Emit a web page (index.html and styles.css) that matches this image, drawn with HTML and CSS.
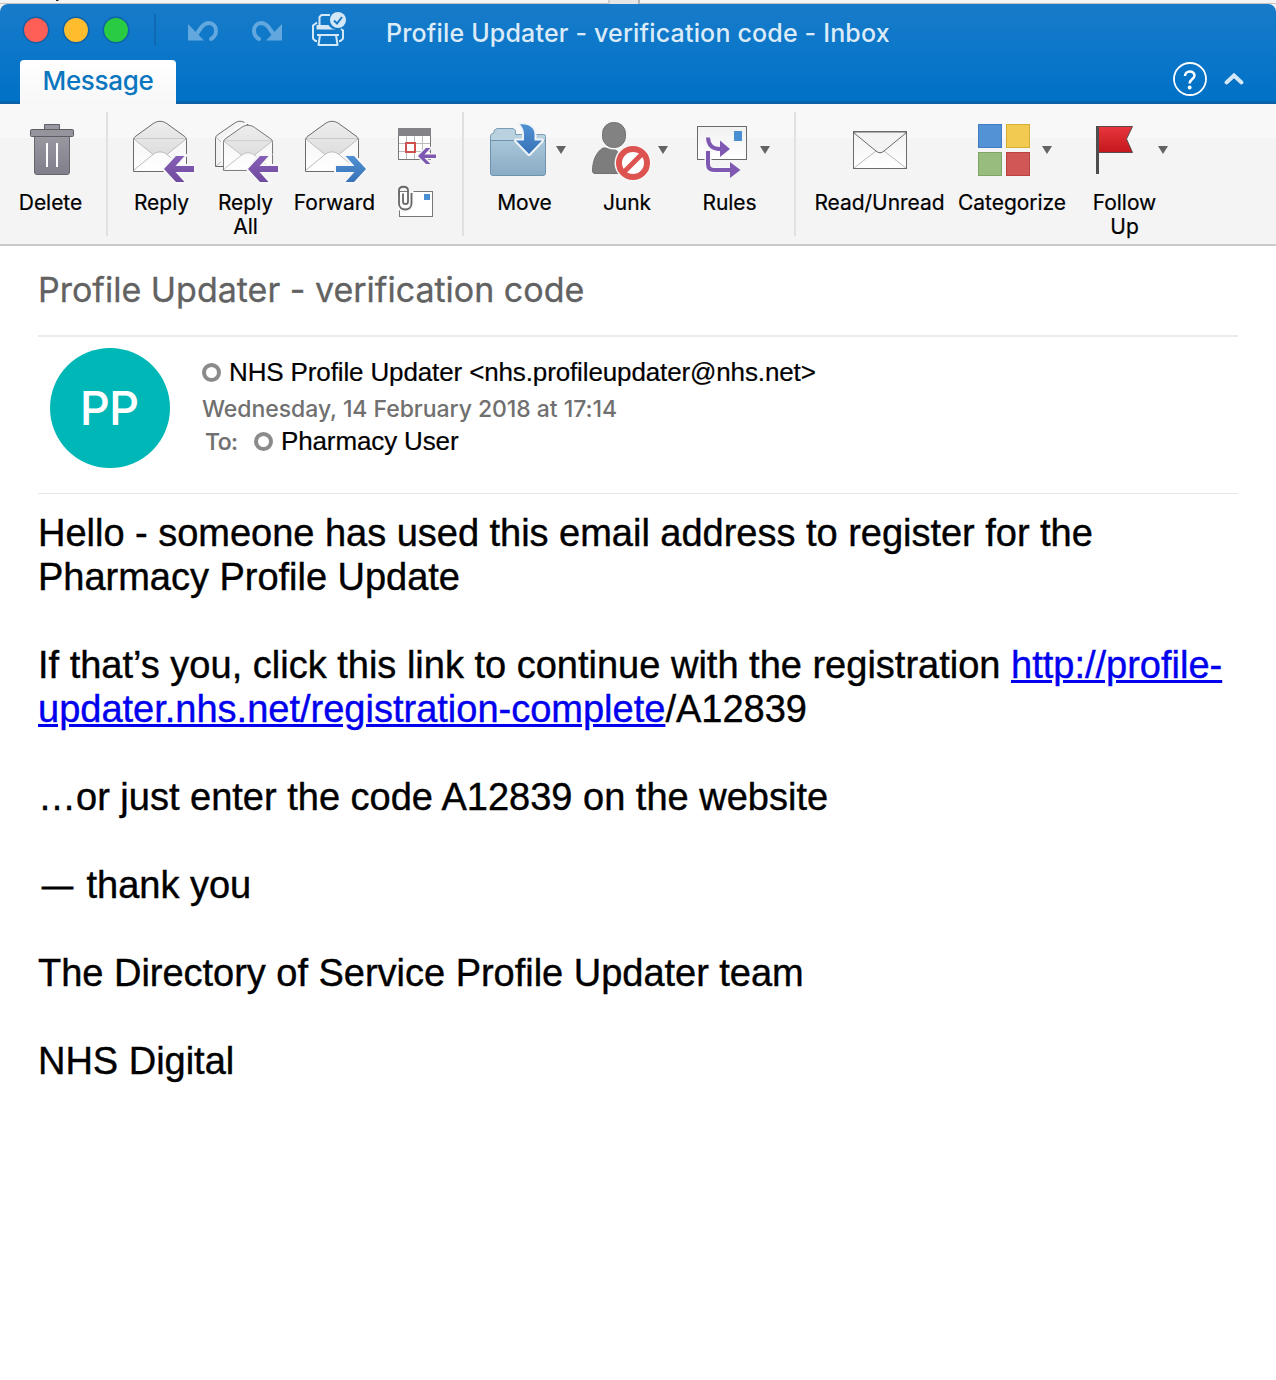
FILE: index.html
```html
<!DOCTYPE html>
<html lang="en">
<head>
<meta charset="utf-8">
<title>Profile Updater - verification code - Inbox</title>
<link rel="stylesheet" href="styles.css">
</head>
<body>
<div class="backdrop"><svg width="1276" height="4" viewBox="0 0 1276 4"><path d="M56 0h3l-1 1h-2z" fill="#222"/><path d="M609 0h29v4h-29z" fill="#e6e6e6"/><path d="M608 0h2v4h-2z" fill="#cfcfcf"/><path d="M638 0h2v4h-2z" fill="#b4b4b4"/></svg></div>
<div class="window">
  <header class="titlebar">
    <div class="toprow">
      <svg class="controls" width="360" height="56" viewBox="0 4 360 56">
        <g stroke="#0f62a8" stroke-width="1.5">
          <circle cx="36" cy="30" r="12.7" fill="#ff5f57"/>
          <circle cx="76" cy="30" r="12.7" fill="#ffbd2e"/>
          <circle cx="116" cy="30" r="12.7" fill="#28cb41"/>
        </g>
        <path d="M155 14v32" stroke="#0f69b4" stroke-width="2"/>
        <g fill="none" stroke="#62a7dd" stroke-width="4" stroke-linecap="round">
          <path d="M196 35L201.500 27C204 24 206.500 23 209 23C213.200 23 216 26.500 216 30.500C216 34 214 37.300 211 39"/>
          <path d="M274 35L268.500 27C266 24 263.500 23 261 23C256.800 23 254 26.500 254 30.500C254 34 256 37.300 259 39"/>
        </g>
        <path d="M188 24L204 40.500H188z" fill="#62a7dd"/>
        <path d="M282 24L266 40.500H282z" fill="#62a7dd"/>
        <g fill="none" stroke="#d4e7f6" stroke-width="2" stroke-linejoin="round">
          <path d="M319.500 26V17L321.500 15H330"/>
          <path d="M317 22.500L313 25.500V38.500L315.500 41H317M341 29L343 30.500V38.500L340.500 41H339"/>
          <path d="M317 35H339M320 35L318.500 45H337.500L336 35"/>
        </g>
        <path d="M316.500 25h12q2.500 4 7.500 4.500h-19.500z" fill="#d4e7f6"/>
        <circle cx="338" cy="20" r="8" fill="#d4e7f6"/>
        <path d="M334 20.500l3 3 5-6.500" fill="none" stroke="#1779c6" stroke-width="2"/>
      </svg>
      <h1 class="window-title">Profile Updater - verification code - Inbox</h1>
    </div>
    <div class="tabrow">
      <div class="tab">Message</div>
      <svg class="help" width="80" height="44" viewBox="1170 60 80 44">
        <circle cx="1190" cy="79" r="16" fill="none" stroke="#fff" stroke-width="1.800"/>
        <path d="M1185 76C1185 70 1194.500 70 1194.500 75.500C1194.500 79 1189.700 79 1189.700 83.500" fill="none" stroke="#fff" stroke-width="2.500"/>
        <circle cx="1189.700" cy="87.500" r="1.900" fill="#fff"/>
        <path d="M1226.500 83.500l7.500-7 7.500 7" fill="none" stroke="#0b5ba0" stroke-opacity=".5" stroke-width="4" stroke-linecap="round"/>
        <path d="M1226.500 82.500l7.500-7 7.500 7" fill="none" stroke="#d4e7f6" stroke-width="4" stroke-linecap="round"/>
      </svg>
    </div>
  </header>

  <svg class="defs" width="0" height="0">
    <defs>
      <linearGradient id="bin" x2="0" y2="1"><stop stop-color="#9a99a2"/><stop offset="1" stop-color="#7f7e8a"/></linearGradient>
      <linearGradient id="paper" x2="0" y2="1"><stop stop-color="#f1f1f1"/><stop offset="1" stop-color="#fff"/></linearGradient>
      <linearGradient id="flap" x2="0" y2="1"><stop stop-color="#ededed"/><stop offset="1" stop-color="#dedede"/></linearGradient>
      <linearGradient id="purple" x2="0" y2="1"><stop stop-color="#8660b6"/><stop offset="1" stop-color="#6f4a9e"/></linearGradient>
      <linearGradient id="blue" x2="0" y2="1"><stop stop-color="#4f90d2"/><stop offset="1" stop-color="#3872b8"/></linearGradient>
      <linearGradient id="folder" x2="0" y2="1"><stop stop-color="#a9c6d9"/><stop offset="1" stop-color="#8aabc5"/></linearGradient>
      <linearGradient id="red" x2="0" y2="1"><stop stop-color="#e8373e"/><stop offset="1" stop-color="#c4161c"/></linearGradient>
      <g id="envelope">
        <path d="M0.500 19.500C0.500 17 1.500 16 3 15L20 2.700C24.500 -.5 29.500 -.5 34 2.700L51 15C52.500 16 53.500 17 53.500 19.500V50.500H0.500z" fill="url(#paper)"/>
        <path d="M1 18C1.500 16.500 2 15.700 3 15L20 2.700C24.500 -.5 29.500 -.5 34 2.700L51 15C52 15.700 52.700 16.500 53 18L34 33.500C29.500 30 24.500 30 20 33.500z" fill="url(#flap)"/>
        <path d="M1 17.500H53" stroke="#c9c9c9"/>
        <path d="M1 18L20 33.500M53 18L34 33.500M1 49L20 33.500C24.500 30 29.500 30 34 33.500L53 49" fill="none" stroke="#bdbdbd"/>
        <path d="M0.500 19.500C0.500 17 1.500 16 3 15L20 2.700C24.500 -.5 29.500 -.5 34 2.700L51 15C52.500 16 53.500 17 53.500 19.500V50.500H0.500z" fill="none" stroke="#6b6b6b"/>
      </g>
      <path id="arrow" d="M0 13L12 0h8.500L11.500 10H30V16H11.500L20.500 26H12z"/>
      <path id="caret" d="M0 0h10l-5 8z" fill="#636363"/>
    </defs>
  </svg>

  <nav class="ribbon">
    <div class="group group-delete">
      <div class="button w100">
        <svg width="100" height="76" viewBox="0 112 100 76">
          <path d="M44.500 130v-5.500h15v5.500" fill="#9998a0" stroke="#5f5f63"/>
          <path d="M34.500 136h35v36q0 2.500-2.500 2.500H37q-2.500 0-2.500-2.500z" fill="url(#bin)" stroke="#66666b"/>
          <rect x="30.500" y="129.500" width="43" height="7" rx="1" fill="#95949d" stroke="#5f5f63"/>
          <path d="M47 143v24M57 143v24" stroke="#fff" stroke-width="2"/>
        </svg>
        <span class="label">Delete</span>
      </div>
    </div>
    <div class="group group-respond">
      <div class="button w82">
        <svg width="82" height="76" viewBox="120 112 82 76">
          <use href="#envelope" x="133" y="121"/>
          <use href="#arrow" x="164" y="156" fill="#f7f7f7" stroke="#f7f7f7" stroke-width="4"/>
          <use href="#arrow" x="164" y="156" fill="url(#purple)"/>
        </svg>
        <span class="label">Reply</span>
      </div>
      <div class="button w86">
        <svg width="86" height="76" viewBox="202 112 86 76">
          <path d="M215.500 166.500V139C215.500 136.500 216.500 135.500 218 134.500L234 123.500C238 120.500 242 120.500 246 123.500L262 134.500V166.500z" fill="#f3f3f3" stroke="#6b6b6b"/>
          <path d="M216 137L223 144M216 166L223 160" stroke="#bbb"/>
          <path d="M222 165V143C222 140 223.500 138 225.500 136.500L241 125.500C245 122.500 250 122.500 254 125.500" fill="none" stroke="#fafafa" stroke-width="2"/>
          <g transform="translate(223 125) scale(.926 .9)">
            <use href="#envelope"/>
          </g>
          <use href="#arrow" x="248" y="156" fill="#f7f7f7" stroke="#f7f7f7" stroke-width="4"/>
          <use href="#arrow" x="248" y="156" fill="url(#purple)"/>
        </svg>
        <span class="label">Reply<br>All</span>
      </div>
      <div class="button w92">
        <svg width="92" height="76" viewBox="288 112 92 76">
          <use href="#envelope" x="305" y="121"/>
          <g transform="translate(366 156) scale(-1 1)">
            <use href="#arrow" fill="#f7f7f7" stroke="#f7f7f7" stroke-width="4"/>
            <use href="#arrow" fill="url(#blue)"/>
          </g>
        </svg>
        <span class="label">Forward</span>
      </div>
      <div class="small-buttons">
        <svg width="50" height="56" viewBox="390 122 50 56">
          <rect x="398.500" y="129.500" width="32" height="30" fill="#fff" stroke="#777"/>
          <path d="M398 128h33v8h-33z" fill="#838387"/>
          <path d="M399 143.500h31M399 151.500h31M406.500 136v23M414.500 136v23M422.500 136v23" stroke="#bcbcbc"/>
          <rect x="406" y="143" width="9" height="9" fill="#fff" stroke="#d0504e" stroke-width="2"/>
          <path d="M418 156l8-8h4.500l-6 6.500H436v3.500H424.500l6 6H426z" fill="#7e58b0" stroke="#f7f7f7" stroke-width="2.500" paint-order="stroke"/>
        </svg>
        <svg width="50" height="40" viewBox="390 182 50 40">
          <rect x="399.500" y="191.500" width="33" height="25" fill="#fff" stroke="#777"/>
          <path d="M424 194h6v6h-6z" fill="#4a8ed3"/>
          <path d="M399 196V204C399 212 411 212 411 204V190" fill="none" stroke="#f7f7f7" stroke-width="5"/>
          <path d="M403 193.500V201.500C403 205 408 205 408 201.500V190.500C408 185.500 399 185.500 399 190.500V203.500C399 211.500 411.500 211.500 411.500 203.500V193" fill="none" stroke="#66666a" stroke-width="1.800"/>
        </svg>
      </div>
    </div>
    <div class="group group-file">
      <div class="button w100">
        <svg width="100" height="76" viewBox="474 112 100 76">
          <path d="M490.500 142V136q0-2 2-2.500L494 133V130.500L497 128.500H513L515.500 130.500V134.500H543.500q2 0 2 2V145z" fill="#bad1df" stroke="#7a9cb4"/>
          <path d="M490.500 140.500H545.500V173q0 2.500-2.500 2.500H493q-2.500 0-2.500-2.500z" fill="url(#folder)" stroke="#6e93af"/>
          <path d="M520 124.500C528 123.500 534.500 127.500 534.500 134V140.500H542L529 154L516 140.500H524V135C524 130.500 523 127.500 520 124.500z" fill="url(#blue)" stroke="#eef3f7" stroke-width="4" stroke-linejoin="round" paint-order="stroke"/>
          <use href="#caret" x="556" y="146"/>
        </svg>
        <span class="label">Move</span>
      </div>
      <div class="button w100">
        <svg width="100" height="76" viewBox="577 112 100 76">
          <path d="M603 148C596 152 592.500 161 592.500 171Q592.500 173.500 595 173.500H622V162C622 156 617 149 611 148z" fill="#7d7d7d" stroke="#717171"/>
          <rect x="602.500" y="122.500" width="23" height="25" rx="11" fill="#828282" stroke="#f6f6f6" stroke-width="4" paint-order="stroke"/>
          <rect x="602.500" y="122.500" width="23" height="25" rx="11" fill="none" stroke="#717171"/>
          <circle cx="633" cy="163" r="18.500" fill="#f7f7f7"/>
          <circle cx="633" cy="163" r="14" fill="#fff" stroke="#dc5350" stroke-width="6"/>
          <path d="M623.500 172.500l19-19" stroke="#dc5350" stroke-width="5"/>
          <use href="#caret" x="658" y="146"/>
        </svg>
        <span class="label">Junk</span>
      </div>
      <div class="button w100">
        <svg width="100" height="76" viewBox="679 112 100 76">
          <rect x="697.500" y="126.500" width="49" height="33" fill="url(#paper)" stroke="#6b6b6b"/>
          <path d="M734 131h8v10h-8z" fill="#4a8ed3"/>
          <path d="M708 137.500Q708.500 149 720 149H722M708 151V164Q708 170 714 170H732" fill="none" stroke="#f8f8f8" stroke-width="7"/>
          <path d="M708 137.500Q708.500 149 720 149H722M708 151V164Q708 170 714 170H732" fill="none" stroke="#7f59b1" stroke-width="4"/>
          <path d="M720 140.500L730 149L720 157zM730 162L740.500 170L730 178z" fill="#7f59b1"/>
          <use href="#caret" x="760" y="146"/>
        </svg>
        <span class="label">Rules</span>
      </div>
    </div>
    <div class="group group-mark">
      <div class="button w140">
        <svg width="140" height="76" viewBox="809 112 140 76">
          <rect x="853.500" y="131.500" width="53" height="37" fill="url(#paper)"/>
          <path d="M854 168L876 151M906 168L884 151" stroke="#bbb"/>
          <path d="M854 133L876 151Q880 154.500 884 151L906 133V132H854z" fill="#f3f3f3" stroke="#6b6b6b"/>
          <rect x="853.500" y="131.500" width="53" height="37" fill="none" stroke="#6b6b6b"/>
        </svg>
        <span class="label">Read/Unread</span>
      </div>
      <div class="button w120">
        <svg width="120" height="76" viewBox="952 112 120 76">
          <rect x="978.500" y="124.500" width="23" height="23" fill="#5392d4" stroke="#3f7cc0"/>
          <rect x="1006.500" y="124.500" width="23" height="23" fill="#f2ca50" stroke="#d6ad35"/>
          <rect x="978.500" y="152.500" width="23" height="23" fill="#97bd7e" stroke="#7fa566"/>
          <rect x="1006.500" y="152.500" width="23" height="23" fill="#d15656" stroke="#b84141"/>
          <use href="#caret" x="1042" y="146"/>
        </svg>
        <span class="label">Categorize</span>
      </div>
      <div class="button w100">
        <svg width="100" height="76" viewBox="1074 112 100 76">
          <path d="M1098 126.500H1132.500L1126.500 139L1132.500 152.500H1098z" fill="url(#red)" stroke="#5a4a4a"/>
          <path d="M1097.500 126v48" stroke="#4d4d4d" stroke-width="3"/>
          <use href="#caret" x="1158" y="146"/>
        </svg>
        <span class="label">Follow<br>Up</span>
      </div>
    </div>
  </nav>

  <main class="message">
    <h2 class="subject">Profile Updater - verification code</h2>
    <section class="meta">
      <div class="avatar">PP</div>
      <div class="people">
        <div class="from"><i class="presence"></i>NHS Profile Updater &lt;nhs.profileupdater@nhs.net&gt;</div>
        <div class="date">Wednesday, 14 February 2018 at 17:14</div>
        <div class="to"><span class="to-label">To:</span><i class="presence"></i>Pharmacy User</div>
      </div>
    </section>
    <article class="body">
      <p>Hello - someone has used this email address to register for the<br>Pharmacy Profile Update</p>
      <p class="loose">If that’s you, click this link to continue with the registration <a>http://profile-</a><br><a>updater.nhs.net/registration-complete</a>/A12839</p>
      <p class="loose">…or just enter the code A12839 on the website</p>
      <p><span class="dash">—</span> thank you</p>
      <p>The Directory of Service Profile Updater team</p>
      <p>NHS Digital</p>
    </article>
  </main>
</div>
</body>
</html>
```
FILE: styles.css
```css
* { box-sizing: border-box; }
body { margin: 0; background: #f3f3f3; font-family: Inter, "Liberation Sans", sans-serif; color: #000; }
.backdrop { height: 4px; background: linear-gradient(#f4f4f4 0 3px, #c4c4c4 3px); overflow: hidden; }
.backdrop svg { display: block; }
.window { height: 1376px; background: #fff; border-radius: 8px 8px 0 0; overflow: hidden; }
.titlebar { height: 100px; background: linear-gradient(#187bc9, #0a76c9 55%, #0071c5 97px, #0960a6 98px); }
.toprow { display: flex; height: 56px; }
.controls, .help, .button svg, .small-buttons svg { display: block; flex: none; }
.window-title { margin: 0 0 0 26px; font-size: 25px; line-height: 59px; font-weight: 500; letter-spacing: 0.17px; color: #dcebf8; white-space: nowrap; }
.tabrow { display: flex; justify-content: space-between; height: 44px; padding: 0 26px 0 20px; }
.tab { width: 156px; border-radius: 4px 4px 0 0; background: linear-gradient(#fff, #f7f7f7); text-align: center; font-size: 26px; line-height: 42px; font-weight: 500; letter-spacing: -0.3px; color: #0a76bf; }
.defs { position: absolute; }
.ribbon { display: flex; height: 142px; padding-top: 8px; background: linear-gradient(#f8f8f8 0 34px, #f4f4f4 34px); border-bottom: 2px solid #c9c9c9; }
.group { display: flex; height: 124px; border-right: 2px solid #e1e1e1; }
.group-delete { width: 108px; }
.group-respond { width: 356px; padding-left: 12px; }
.group-file { width: 332px; padding-left: 10px; gap: 2.5px; }
.group-mark { padding-left: 13px; gap: 2.5px; border: 0; }
.button { display: flex; flex-direction: column; flex: none; }
.w82 { width: 82px; }
.w86 { width: 86px; }
.w92 { width: 92px; }
.w100 { width: 100px; }
.w120 { width: 120px; }
.w140 { width: 140px; }
.label { margin-top: 3px; padding-left: 1px; font-size: 21px; line-height: 24px; letter-spacing: -0.04px; text-align: center; white-space: nowrap; -webkit-text-stroke: 0.2px; }
.small-buttons { display: flex; flex-direction: column; gap: 4px; padding: 10px 0 0 10px; }
.message { padding: 0 38px; }
.subject { margin: 0; height: 91px; border-bottom: 2px solid #ebebeb; font-size: 34px; line-height: 87px; font-weight: 400; letter-spacing: 0; color: #626262; white-space: nowrap; -webkit-text-stroke: 0.3px; }
.meta { display: flex; height: 157px; padding: 11px 0 0 12px; border-bottom: 1px solid #e6e6e6; }
.avatar { width: 120px; height: 120px; border-radius: 50%; background: #00b7b8; color: #fff; font-size: 47px; font-weight: 500; line-height: 120px; letter-spacing: -0.8px; text-align: center; text-indent: -2px; }
.people { padding-left: 32px; white-space: nowrap; }
.from, .to { display: flex; align-items: center; font-family: "Liberation Sans", sans-serif; font-size: 26px; letter-spacing: -0.13px; -webkit-text-stroke: 0.2px; }
.from { height: 42px; padding-top: 6px; }
.date { height: 35px; font-size: 23px; line-height: 39px; font-weight: 500; letter-spacing: -0.05px; color: #707070; }
.to { height: 33px; padding-left: 3px; }
.to-label { width: 49px; font-family: Inter, sans-serif; font-size: 23px; font-weight: 500; letter-spacing: -0.5px; color: #707070; }
.presence { width: 19px; height: 19px; margin-right: 8px; border: 4px solid #8b8b8b; border-radius: 50%; }
.body { padding-top: 17px; font: 38px/44px "Liberation Sans", sans-serif; letter-spacing: -0.02px; white-space: nowrap; -webkit-text-stroke: 0.4px; }
.body p { margin: 0 0 44px; }
.body .loose { letter-spacing: 0; }
.body a { color: #0000ee; text-decoration: underline; }
.dash { padding: 0 3px 0 4px; font-size: 31px; line-height: 1; vertical-align: 2px; -webkit-text-stroke: 0.9px; }
```
